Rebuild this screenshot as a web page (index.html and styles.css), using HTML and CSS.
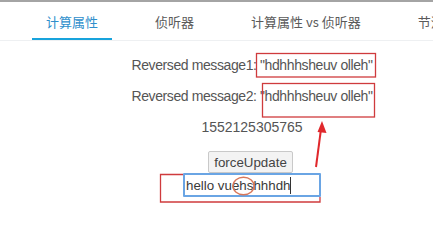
FILE: index.html
```html
<!DOCTYPE html>
<html lang="zh-CN">
<head>
<meta charset="utf-8">
<title>计算属性</title>
<link rel="stylesheet" href="styles.css">
</head>
<body>
<div class="page">
  <div class="topline"></div>
  <nav class="tabs">
    <a class="tab active">计算属性</a>
    <a class="tab">侦听器</a>
    <a class="tab">计算属性 vs 侦听器</a>
    <a class="tab">节流</a>
  </nav>
  <main class="content">
    <p class="line msg">Reversed message1: "hdhhhsheuv olleh"</p>
    <p class="line msg">Reversed message2: "hdhhhsheuv olleh"</p>
    <p class="line">1552125305765</p>
    <div class="controls">
      <button class="btn" type="button">forceUpdate</button>
      <input class="field" type="text" value="hello vuehshhhdh">
    </div>
  </main>
  <svg class="notes" width="433" height="227" viewBox="0 0 433 227" aria-hidden="true">
    <rect x="256.5" y="53.5" width="119" height="23.5" fill="none" stroke="#cf3b3d" stroke-width="1.3"/>
    <rect x="262.5" y="83.5" width="112" height="33.5" fill="none" stroke="#cf3b3d" stroke-width="1.3"/>
    <polyline points="183,174.5 160.5,174.5 160.5,202 320,202 320,197" fill="none" stroke="#cf3b3d" stroke-width="1.3"/>
    <line x1="290.5" y1="177" x2="290.5" y2="194" stroke="#333" stroke-width="1"/>
    <ellipse cx="243.5" cy="186" rx="10.5" ry="8.8" fill="none" stroke="#d8775a" stroke-width="1.4"/>
    <line x1="316" y1="167" x2="321" y2="129" stroke="#e0282c" stroke-width="2"/>
    <polygon points="322,121 326.5,133 317.5,132" fill="#e0282c"/>
  </svg>
</div>
</body>
</html>
```

FILE: styles.css
```css
* { box-sizing: border-box; }

html, body {
  margin: 0;
  padding: 0;
  background: #ffffff;
}

body {
  font-family: "Liberation Sans", "Noto Sans CJK SC", Arial, sans-serif;
  color: #555555;
  width: 433px;
  height: 227px;
  overflow: hidden;
}

.page {
  position: relative;
  width: 433px;
  height: 227px;
  overflow: hidden;
}

.topline {
  height: 2px;
  background: #a4a4a4;
}

.tabs {
  display: flex;
  gap: 29px;
  padding-left: 32px;
  border-bottom: 1px solid #eef0f2;
  white-space: nowrap;
  overflow: hidden;
}

.tab {
  display: block;
  flex: none;
  padding: 11px 14px 8px;
  line-height: 17px;
  font-size: 13px;
  font-family: "Noto Sans CJK SC", "Liberation Sans", sans-serif;
  color: #5a5a5a;
  border-bottom: 2px solid transparent;
}

.tab.active {
  color: #2f8fcc;
  border-bottom-color: #18a3dc;
}

.content {
  padding-top: 2px;
  padding-left: 71px;
  text-align: center;
}

.line {
  margin: 14px 0;
  font-size: 14px;
  line-height: 17px;
  color: #555555;
}

.msg {
  letter-spacing: -0.4px;
}

.controls {
  display: flex;
  flex-direction: column;
  align-items: center;
  margin-top: 15px;
}

.btn {
  font-family: "Liberation Sans", Arial, sans-serif;
  font-size: 13.333px;
  color: #444444;
  height: 22px;
  width: 85px;
  padding: 0;
  background: #f3f3f3;
  border: 1px solid #c9c9c9;
  border-radius: 2px;
  margin-left: -3px;
}

.field {
  font-family: "Liberation Sans", Arial, sans-serif;
  font-size: 13.333px;
  color: #3a3a3a;
  width: 138px;
  height: 24px;
  padding: 0 1px;
  border: 2px solid #6aa5e4;
  border-radius: 1px;
  outline: none;
  background: #ffffff;
}

.notes {
  position: absolute;
  left: 0;
  top: 0;
  pointer-events: none;
}
```
